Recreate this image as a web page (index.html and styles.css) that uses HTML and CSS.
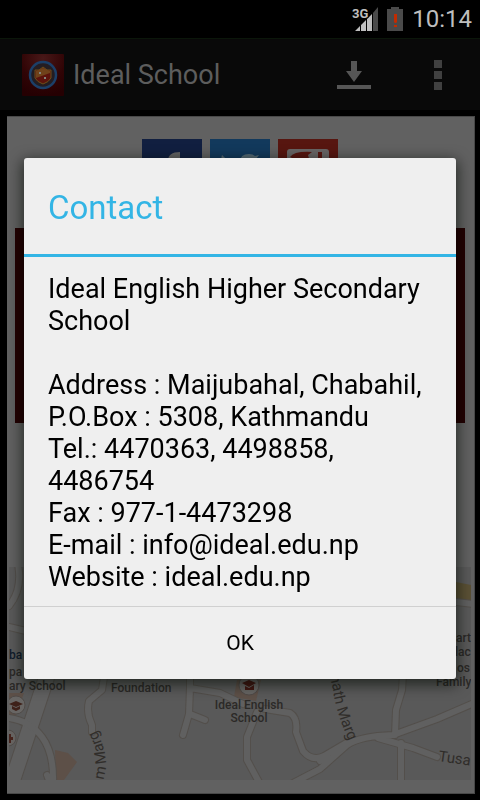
FILE: index.html
```html
<!DOCTYPE html>
<html lang="en">
<head>
<meta charset="utf-8">
<meta name="viewport" content="width=device-width, initial-scale=1">
<title>Ideal School</title>
<link rel="stylesheet" href="styles.css">
</head>
<body>
<div class="status-bar">
  <svg class="signal" width="24" height="26" viewBox="0 0 24 26" aria-label="3G signal">
    <path d="M1 25 6 20V25zM7 19 12 14V25H7zM13 13 18 8V25H13z" fill="#bebebe"/>
    <path d="M19 7 24 1V25H19z" fill="#4a4a4a"/>
    <text x="-2" y="12" class="signal-label">3G</text>
  </svg>
  <svg class="battery" width="16" height="24" viewBox="0 0 16 24" aria-label="Battery low">
    <path d="M0 2H4V0H12V2H16V24H0z" fill="#4a4a4a"/>
    <path d="M7 7H10V15L9 16H8L7 15zM7 18H10V20H7z" fill="#c22b00"/>
  </svg>
  <time class="clock">10:14</time>
</div>
<header class="action-bar">
  <svg class="logo" width="42" height="42" viewBox="0 0 42 42" aria-hidden="true">
    <defs><radialGradient id="red" cx=".5" cy=".1" r=".9"><stop offset="0" stop-color="#481818"/><stop offset=".6" stop-color="#300405"/><stop offset="1" stop-color="#250002"/></radialGradient></defs>
    <rect width="42" height="42" rx="1" fill="url(#red)"/>
    <circle cx="21" cy="21" r="13" fill="#241d22" stroke="#1c3f68" stroke-width="2.5"/>
    <path d="M13 16 17 16 21 13 25 16 29 16 29 24Q27 28 21 30Q15 28 13 24z" fill="#5c130c" stroke="#6a4f1a"/>
    <path d="M14 17 21 14 28 17 28 19 14 24z" fill="#70421a"/>
    <path d="M17 18h2v2h-2zM22 23h2v2h-2z" fill="#81827c"/>
  </svg>
  <h1 class="app-title">Ideal School</h1>
  <button class="icon-button" aria-label="Download">
    <svg width="34" height="28" viewBox="0 0 34 28"><path d="M14 0H20V10H25L17 21 9 10H14zM0 24H34V28H0z" fill="#565656"/></svg>
  </button>
  <button class="icon-button more" aria-label="More options">
    <svg width="8" height="30" viewBox="0 0 8 30"><path d="M0 0H8V8H0zM0 11H8V19H0zM0 22H8V30H0z" fill="#404040"/></svg>
  </button>
</header>
<main class="page">
  <nav class="social">
    <a href="#" aria-label="Facebook"><svg viewBox="0 0 60 60"><rect width="60" height="60" fill="#111f40"/><path d="M26 60V34H20V26H26V22Q26 13 38 13V20Q33 20 33 23V26H38V34H33V60z" fill="#636363"/></svg></a>
    <a href="#" aria-label="Twitter"><svg viewBox="0 0 60 60"><rect width="60" height="60" fill="#12395c"/><path d="M12 16Q20 25 30 25Q29 15 39 15Q43 15 45 17L49 16 46 20 50 20 46 24Q45 48 24 48Q16 48 10 44Q18 44 22 41Q15 39 14 34L18 34Q12 30 12 25L15 26Q10 21 12 16z" fill="#536773"/></svg></a>
    <a href="#" aria-label="Google Plus"><svg viewBox="0 0 60 60"><rect width="60" height="60" fill="#571610"/><path d="M12 10H48Q51 10 51 13V48H9V13Q9 10 12 10z" fill="#686565"/><path d="M12 18Q16 12 34 13L30 16Q34 27 23 29Q15 27 16 20zM40 13H44V30H40z" fill="#571610"/></svg></a>
  </nav>
  <section class="banner" aria-label="Ideal School"></section>
  <svg class="map" viewBox="9 567 462 213" role="img" aria-label="Map">
    <defs>
      <path id="marg-west" d="M103 780Q108 765 104 750T93 725"/>
      <path id="marg-east" d="M328 668 333 690Q336 714 352 748"/>
      <g id="roads">
        <path d="M17 560Q24 588 9 606M9 627 30 632M105 670 102 690 89 701Q86 713 92 725V732M183 735 189 714 190 688 220 693 243 704M190 714 205 720M257 712 247 737V760L260 784M265 709 290 713Q298 718 296 732L303 751Q312 762 324 756L353 739M293 783 320 769 347 745Q360 736 393 735L437 719 474 703M320 761 327 757M403 675 402 690 396 710 395 735M378 738 413 748 437 757M401 743V784M190 675V689"/>
        <path d="M9 718Q30 721 42 737T53 783M50 783 47 775"/>
        <path d="M456 602 474 604"/>
      </g>
    </defs>
    <rect x="9" y="567" width="462" height="213" fill="#595959"/>
    <path d="M456 582 471 585V601L456 598z" fill="#5a5035"/>
    <path d="M55 750 68 753 77 762 64 780H56zM237 680H261L256 701 234 697zM9 693H24L15 718H9z" fill="#5d5048"/>
    <path d="M50 667 12 782" class="road-edge wide"/>
    <use href="#roads" class="road-edge"/>
    <path d="M50 667 12 782" class="road wide"/>
    <use href="#roads" class="road"/>
    <circle cx="16" cy="705" r="9" fill="#686664" stroke="#504b48"/>
    <path d="M9 704 16 701 23 704 16 707zM12 706 16 708 20 706V709L16 711 12 709z" fill="#3e2119"/>
    <circle cx="8" cy="738" r="8" fill="#656260" stroke="#504b48"/>
    <path d="M7 734h4v3h2v3h-2v3H7z" fill="#45221b"/>
    <circle cx="249" cy="685" r="10" fill="#686664" stroke="#504b48"/>
    <path d="M242 683 249 680 256 683 249 687zM245 686 249 688 254 685V690H245z" fill="#431812"/>
    <g class="map-label">
      <text x="9" y="659">ba</text>
      <text x="9" y="676">pa</text>
      <text x="9" y="690">ary School</text>
      <text x="111" y="692">Foundation</text>
      <text x="249" y="709" text-anchor="middle">Ideal English</text>
      <text x="249" y="722" text-anchor="middle">School</text>
      <text x="456" y="642">art</text>
      <text x="455" y="656">lac</text>
      <text x="457" y="672">os</text>
      <text x="436" y="686">Family</text>
    </g>
    <g class="street-label">
      <text><textPath href="#marg-west">m Marg</textPath></text>
      <text><textPath href="#marg-east">anath Marg</textPath></text>
      <text x="438" y="761" transform="rotate(8 438 761)">Tusa</text>
    </g>
  </svg>
</main>
<div class="overlay">
  <section class="dialog" role="dialog" aria-modal="true" aria-labelledby="dialog-title">
    <h2 class="dialog-title" id="dialog-title">Contact</h2>
    <div class="dialog-body">
      <p>Ideal English Higher Secondary School</p>
      <address>Address : Maijubahal, Chabahil, P.O.Box : 5308, Kathmandu<br>Tel.: 4470363, 4498858, 4486754<br>Fax : 977-1-4473298<br>E-mail : info@ideal.edu.np<br>Website : ideal.edu.np</address>
    </div>
    <button class="dialog-action">OK</button>
  </section>
</div>
</body>
</html>
```
FILE: styles.css
```css
* { box-sizing: border-box; }
body {
  margin: 0;
  min-height: 100vh;
  display: flex;
  flex-direction: column;
  background: #000;
  font-family: Roboto, "Liberation Sans", sans-serif;
}
h1, h2, p { margin: 0; font-weight: 400; }
button { border: 0; padding: 0; background: none; font-family: inherit; }
.status-bar {
  height: 38px;
  padding: 0 8px;
  display: flex;
  align-items: center;
  justify-content: flex-end;
  gap: 9px;
}
.signal { overflow: visible; }
.signal-label { font-size: 13px; font-weight: 700; fill: #bebebe; stroke: #000; stroke-width: 2px; paint-order: stroke; }
.clock { font-size: 24px; color: #bebebe; }
.action-bar {
  height: 72px;
  padding: 0 38px 0 22px;
  display: flex;
  align-items: center;
  gap: 9px;
  background: #090909;
  border-top: 1px solid #0b160a;
}
.app-title { flex: 1; font-size: 27px; color: #5d5d5d; }
.icon-button { display: flex; }
.more { margin-left: 54px; }
.page {
  flex: 1;
  margin: 6px 5px 6px 7px;
  padding: 22px 3px 13px 2px;
  display: flex;
  flex-direction: column;
  background: #616161;
  border: 1px solid #484848;
  border-left: 0;
}
.social { display: flex; justify-content: center; gap: 8px; }
.social a { width: 60px; height: 60px; }
.social svg { display: block; }
.banner { height: 195px; margin: 29px 6px 0; background: #230002; }
.map { display: block; width: 100%; margin-top: auto; }
.road-edge, .road { fill: none; stroke-linecap: round; stroke-linejoin: round; }
.road-edge { stroke: #534f4b; stroke-width: 8px; }
.road { stroke: #606060; stroke-width: 6px; }
.road-edge.wide { stroke-width: 17px; }
.road.wide { stroke-width: 15px; }
.map-label { font-size: 12px; font-weight: 500; fill: #2b2927; }
.map-label text:first-child { fill: #101c2c; }
.street-label { font-size: 15px; fill: #302d2a; }
.overlay {
  position: fixed;
  inset: 38px 0 2px;
  padding: 0 24px;
  display: grid;
  align-items: center;
}
.dialog {
  background: #efefef;
  border-radius: 3px;
  box-shadow: 0 4px 14px 2px rgba(0, 8, 0, .6);
  overflow: hidden;
}
.dialog-title {
  padding: 4px 24px 0;
  font-size: 33px;
  line-height: 92px;
  color: #33b5e5;
  border-bottom: 3px solid #33b5e5;
}
.dialog-body { padding: 16px 24px 13px; font-size: 27px; line-height: 32px; color: #000; }
.dialog-body address { margin-top: 32px; font-style: normal; }
.dialog-action {
  display: block;
  width: 100%;
  height: 73px;
  border-top: 1px solid #d0d0d0;
  font-size: 21px;
  color: #000;
}
```
